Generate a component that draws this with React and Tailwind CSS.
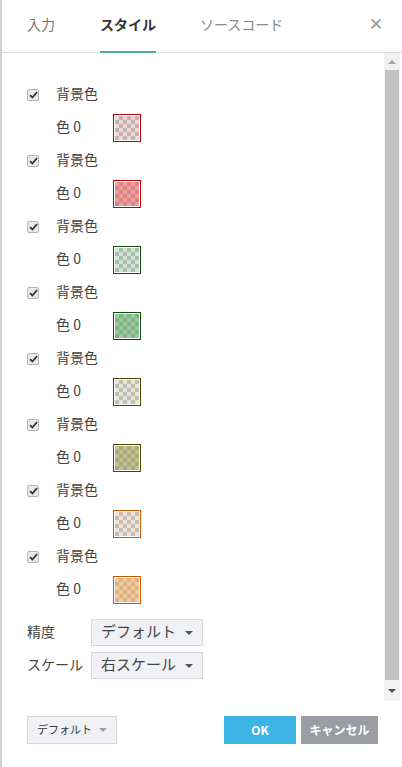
import React from "react";

const SWATCHES = [
  { border: "border-[#b30000]", tint: "bg-[rgba(200,40,40,0.14)]" },
  { border: "border-[#c00000]", tint: "bg-[rgba(230,40,40,0.42)]" },
  { border: "border-[#0b4d0b]", tint: "bg-[rgba(40,140,60,0.16)]" },
  { border: "border-[#0b4d0b]", tint: "bg-[rgba(40,150,50,0.45)]" },
  { border: "border-[#4d4800]", tint: "bg-[rgba(140,140,60,0.14)]" },
  { border: "border-[#4d4800]", tint: "bg-[rgba(130,130,30,0.45)]" },
  { border: "border-[#d35400]", tint: "bg-[rgba(210,130,60,0.14)]" },
  { border: "border-[#d35400]", tint: "bg-[rgba(240,150,50,0.45)]" },
];

const font = "font-['Noto_Sans_CJK_JP','Noto_Sans',sans-serif]";

const Checkbox = () => (
  <span className="w-[12px] h-[12px] rounded-[2px] border border-[#b5b5b5] bg-[#e9e9e9] flex items-center justify-center">
    <svg width="9" height="8" viewBox="0 0 9 8">
      <path d="M1 4.2 L3.4 6.5 L8 1.2" fill="none" stroke="#333" strokeWidth="1.8" />
    </svg>
  </span>
);

const Swatch = ({ border, tint }) => (
  <div className={`w-[28px] h-[28px] border ${border} bg-white p-[1px]`}>
    <div className="w-full h-full bg-[conic-gradient(#c8c8c8_25%,#f4f4f4_0_50%,#c8c8c8_0_75%,#f4f4f4_0)] bg-[length:8px_8px]">
      <div className={`w-full h-full ${tint}`} />
    </div>
  </div>
);

const Caret = ({ color = "border-t-[#555]" }) => (
  <span className={`w-0 h-0 border-l-[4px] border-r-[4px] border-t-[4px] border-l-transparent border-r-transparent ${color}`} />
);

const Select = ({ value }) => (
  <div className="w-[112px] h-[27px] bg-[#f0f1f5] border border-[#d6d8dd] flex items-center justify-between pl-[9px] pr-[9px] text-[15px] text-[#444] whitespace-nowrap">
    <span className="pb-[2px]">{value}</span>
    <Caret />
  </div>
);

export default function App() {
  return (
    <div className={`w-[402px] h-[767px] bg-white flex flex-col border-l-2 border-[#cfcfcf] ${font}`}>
      {/* Tabs */}
      <div className="h-[53px] flex items-stretch border-b border-[#dcdcdc] whitespace-nowrap">
        <div className="flex items-stretch pl-[25px] text-[14px]">
          <div className="flex items-center text-[#777] w-[73px] pb-[3px]">入力</div>
          <div className="flex items-center justify-center text-[#333] font-bold border-b-2 border-[#4fb386] -mb-px w-[56px] pb-[3px]">
            スタイル
          </div>
          <div className="flex items-center text-[#888] ml-[44px] pb-[3px]">ソースコード</div>
        </div>
        <div className="ml-auto mr-[19px] flex items-center text-[#9a9a9a] text-[17px] -mt-[6px]">✕</div>
      </div>

      {/* Body */}
      <div className="h-[648px] flex">
        <div className="flex-1 pl-[25px] pt-[25px] text-[14px] text-[#444] whitespace-nowrap">
          {SWATCHES.map((s, i) => (
            <div key={i}>
              <div className="h-[33px] flex items-center">
                <Checkbox />
                <span className="ml-[17px] pb-[2px]">背景色</span>
              </div>
              <div className="h-[33px] flex items-center pl-[29px]">
                <span className="w-[57px] pb-[2px]">色 0</span>
                <Swatch {...s} />
              </div>
            </div>
          ))}
          <div className="mt-[13px] flex flex-col gap-[6px]">
            <div className="flex items-center">
              <span className="w-[64px] pb-[2px]">精度</span>
              <Select value="デフォルト" />
            </div>
            <div className="flex items-center">
              <span className="w-[64px] pb-[2px]">スケール</span>
              <Select value="右スケール" />
            </div>
          </div>
        </div>
        {/* Scrollbar */}
        <div className="w-[16px] mr-[2px] bg-[#f1f1f1] flex flex-col items-center">
          <div className="h-[17px] flex items-center justify-center">
            <span className="w-0 h-0 border-l-[4px] border-r-[4px] border-b-[4px] border-l-transparent border-r-transparent border-b-[#a3a3a3]" />
          </div>
          <div className="w-[14px] h-[610px] bg-[#c1c1c1]" />
          <div className="flex-1 flex items-center justify-center">
            <Caret color="border-t-[#505050]" />
          </div>
        </div>
      </div>

      {/* Footer */}
      <div className="flex items-center pl-[25px] pr-[24px] mt-[15px] whitespace-nowrap">
        <div className="w-[90px] h-[28px] bg-[#f0f1f5] border border-[#d6d8dd] flex items-center justify-between pl-[9px] pr-[9px] text-[11px] text-[#333]">
          <span className="pb-[1px]">デフォルト</span>
          <Caret color="border-t-[#a0a0a0]" />
        </div>
        <div className="ml-auto w-[72px] h-[28px] bg-[#3cb4e5] text-white text-[12px] font-bold flex items-center justify-center">
          OK
        </div>
        <div className="ml-[5px] w-[77px] h-[28px] bg-[#9b9da4] text-white text-[12px] font-bold flex items-center justify-center">
          キャンセル
        </div>
      </div>
    </div>
  );
}
